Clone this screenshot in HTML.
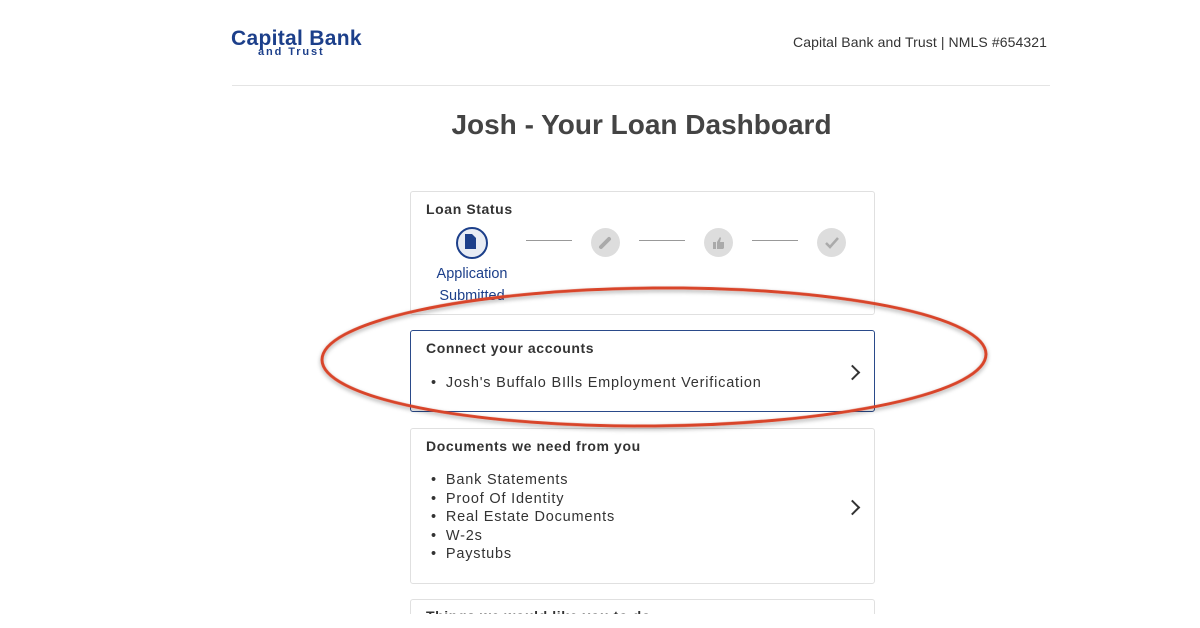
<!DOCTYPE html>
<html><head><style>
html,body{margin:0;width:1200px;height:628px;overflow:hidden}
body{background:#fff;font-family:"Liberation Sans",sans-serif;position:relative}
.a{position:absolute}
.card{position:absolute;left:410px;width:463px;border:1px solid #e0e0e0;border-radius:3px;background:#fff}
.h{font-weight:bold;font-size:14px;color:#333;letter-spacing:.6px}
ul{margin:0;padding:0;list-style:none}
li{font-size:14.5px;color:#333;letter-spacing:.8px;line-height:18.5px}
li:before{content:"•";margin-right:9px}
.chev{position:absolute;right:16px;width:9px;height:9px;border-right:2px solid #333;border-top:2px solid #333;transform:rotate(45deg)}
.c{position:absolute;top:228px;width:29px;height:29px;border-radius:50%;background:#ddd}
.ln{position:absolute;top:240px;width:46px;border-top:1px solid #999}
</style></head><body>
<div class="a" style="left:231px;top:27px;color:#1c3f8a;font-weight:bold;font-size:21px;letter-spacing:.3px">Capital Bank</div>
<div class="a" style="left:258px;top:46px;color:#1c3f8a;font-weight:bold;font-size:11px;letter-spacing:1.9px">and Trust</div>
<div class="a" style="left:793px;top:34px;color:#333;font-size:14px;letter-spacing:.1px">Capital Bank and Trust | NMLS #654321</div>
<div class="a" style="left:232px;top:85px;width:818px;border-top:1px solid #e4e4e4"></div>
<div class="a" style="left:0;width:1283px;top:109px;text-align:center;font-size:28px;font-weight:bold;color:#444">Josh - Your Loan Dashboard</div>

<div class="card" style="top:191px;height:122px">
<div class="a h" style="left:15px;top:9px">Loan Status</div>
</div>
<div class="a" style="left:456px;top:227px;width:28px;height:28px;border:2px solid #1c3f8a;border-radius:50%;background:#e8ecf4"></div>
<svg class="a" style="left:465px;top:234px" width="12" height="16"><path d="M0 0H7L11 4V15H0Z" fill="#1c3f8a"/></svg>
<div class="a" style="left:426px;top:263px;width:92px;text-align:center;color:#1c3f8a;font-size:14.5px;line-height:22px">Application Submitted</div>
<div class="ln" style="left:526px"></div>
<div class="c" style="left:591px"></div>
<div class="ln" style="left:639px"></div>
<div class="c" style="left:704px"></div>
<div class="ln" style="left:752px"></div>
<div class="c" style="left:817px"></div>
<svg class="a" style="left:591px;top:228px" width="29" height="29"><path d="M10 19L18 11" stroke="#aaa" stroke-width="4" stroke-linecap="round"/></svg>
<svg class="a" style="left:704px;top:228px" width="29" height="29"><path d="M9 14h3v7H9zM13 14l3-5 1 1-1 4h4v6l-1 1h-6z" fill="#aaa"/></svg>
<svg class="a" style="left:817px;top:228px" width="29" height="29"><path d="M9 15l4 4 8-9" stroke="#aaa" stroke-width="2.5" fill="none"/></svg>

<div class="card" style="top:330px;height:80px;border-color:#2a4a8a">
<div class="a h" style="left:15px;top:9px">Connect your accounts</div>
<ul class="a" style="left:20px;top:43px"><li>Josh's Buffalo BIlls Employment Verification</li></ul>
<div class="chev" style="top:36px"></div>
</div>

<div class="card" style="top:428px;height:154px">
<div class="a h" style="left:15px;top:9px">Documents we need from you</div>
<ul class="a" style="left:20px;top:42px"><li>Bank Statements</li><li>Proof Of Identity</li><li>Real Estate Documents</li><li>W-2s</li><li>Paystubs</li></ul>
<div class="chev" style="top:73px"></div>
</div>

<div class="card" style="top:599px;height:40px">
<div class="a h" style="left:15px;top:8px">Things we would like you to do</div>
</div>
<div class="a" style="left:0;top:614px;width:1200px;height:14px;background:#fff"></div>

<svg class="a" style="left:0;top:0" width="1200" height="628">
<defs><filter id="s"><feDropShadow dx="0" dy="2" stdDeviation="2" flood-opacity=".35"/></filter></defs>
<ellipse cx="654" cy="357" rx="332" ry="69" transform="rotate(-0.5 654 357)" fill="none" stroke="#d8442b" stroke-width="3" filter="url(#s)"/>
</svg>
</body></html>
